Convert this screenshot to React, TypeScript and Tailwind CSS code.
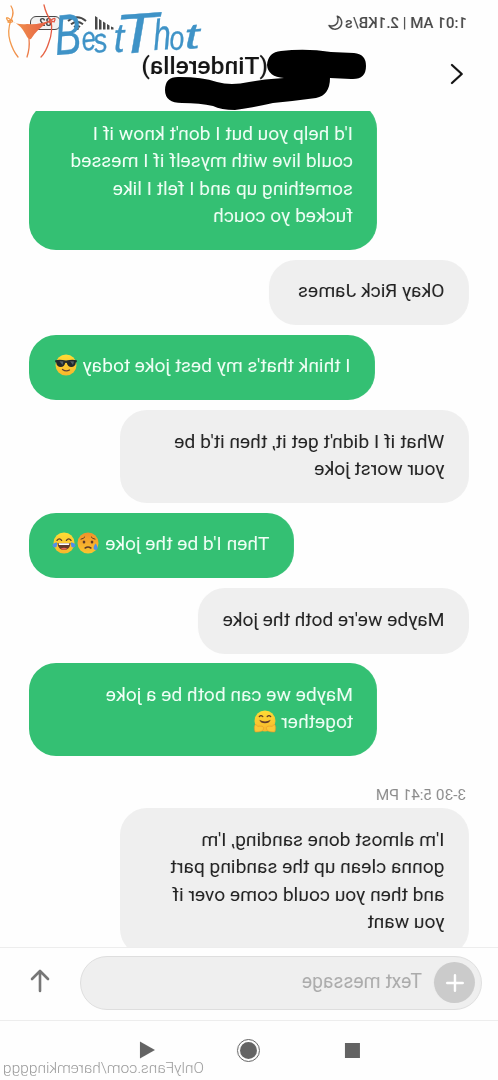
import type { ReactNode } from "react";

type EmojiKind = "cool" | "sad" | "joy" | "hug";

function Emoji({ kind }: { kind: EmojiKind }) {
  return (
    <svg viewBox="0 0 24 24" className="inline-block size-6 align-[-5px]" role="img" aria-label={kind}>
      <defs>
        <linearGradient id={`face-${kind}`} x1="0" y1="0" x2="0" y2="1">
          <stop offset="0" stopColor={kind === "sad" ? "#f0912b" : "#ffdc35"} />
          <stop offset="1" stopColor={kind === "sad" ? "#fbc62f" : "#f8b72c"} />
        </linearGradient>
      </defs>
      <circle cx="12" cy="12" r="10.5" fill={`url(#face-${kind})`} />
      {kind === "cool" && (
        <g>
          <path d="M1.2 7.2Q6 6 12 7.6Q18 6 22.8 7.2V9L21.8 9.6Q21.4 14 17.2 14Q13.8 14 12.8 10Q12 9.3 11.2 10Q10.2 14 6.8 14Q2.6 14 2.2 9.6L1.2 9Z" fill="#23292c" />
          <path d="M4 8.5L8 8.2L5 12Z M14.6 8.5L18.6 8.2L15.4 12Z" fill="#566067" />
          <path d="M8.5 17Q12 19 15.5 16.4" fill="none" stroke="#5f4037" strokeWidth="1.3" strokeLinecap="round" />
        </g>
      )}
      {kind === "sad" && (
        <g>
          <ellipse cx="8" cy="11" rx="1.3" ry="1.6" fill="#5b3828" />
          <ellipse cx="16" cy="11" rx="1.3" ry="1.6" fill="#5b3828" />
          <path d="M5 8.2Q7.6 7.8 8.8 6M19 8.2Q16.4 7.8 15.2 6" fill="none" stroke="#5b3828" strokeWidth="1" strokeLinecap="round" />
          <path d="M9.2 17Q12 15 14.8 17" fill="none" stroke="#5b3828" strokeWidth="1.6" strokeLinecap="round" />
          <path d="M4.4 12.6Q7 16 6.2 18Q4.4 20.2 2.6 18Q1.9 16 4.4 12.6Z" fill="#4f91e8" />
        </g>
      )}
      {kind === "joy" && (
        <g>
          <path d="M5 9.4Q7.3 6.3 9.6 9.4M14.4 9.4Q16.7 6.3 19 9.4" fill="none" stroke="#5b3828" strokeWidth="1.3" strokeLinecap="round" />
          <path d="M5.5 12H18.5Q18 19 12 19Q6 19 5.5 12Z" fill="#623a2a" />
          <path d="M6.5 12.3H17.5L17 14H7Z" fill="#fff" />
          <path d="M8.6 17.7Q12 15.6 15.4 17.7Q12 20 8.6 17.7Z" fill="#ed6550" />
          <path d="M4.8 11.2Q5.8 16.2 3 16.4Q-.4 16 .7 13.4Q1.5 12 4.8 11.2ZM19.2 11.2Q18.2 16.2 21 16.4Q24.4 16 23.3 13.4Q22.5 12 19.2 11.2Z" fill="#5190e7" />
        </g>
      )}
      {kind === "hug" && (
        <g>
          <path d="M6.3 7.6Q8 5.6 9.8 7.6M14.2 7.6Q16 5.6 17.7 7.6" fill="none" stroke="#5b3828" strokeWidth="1.3" strokeLinecap="round" />
          <path d="M6.3 10.8Q12 14 17.7 10.8Q16.4 14.3 12 14.3Q7.6 14.3 6.3 10.8Z" fill="#623a2a" />
          <path d="M2.2 23Q.3 17.6 2.6 15.2L4.7 17.4Q10 16.4 10.8 18.8Q10.6 23.4 2.2 23ZM21.8 23Q23.7 17.6 21.4 15.2L19.3 17.4Q14 16.4 13.2 18.8Q13.4 23.4 21.8 23Z" fill="#fac736" stroke="#e7952c" strokeWidth=".6" />
        </g>
      )}
    </svg>
  );
}

function Bubble({ mine = false, width, children }: { mine?: boolean; width: string; children: ReactNode }) {
  return (
    <div
      className={`shrink-0 whitespace-nowrap rounded-[27px] pt-[17.5px] pb-[20.5px] text-[19.24px] leading-[27.5px] ${width} ${
        mine ? "self-end bg-[#34c073] pl-[24.5px] text-[#f2fff7]" : "self-start bg-[#efefef] pl-[24.5px] text-[#202020]"
      }`}
    >
      {children}
    </div>
  );
}

function StatusBar() {
  return (
    <div className="flex h-[46px] items-center pl-[31px] text-[#484848]">
      <span className="w-[123px] whitespace-nowrap text-[15.1px] font-medium">1:01 AM | 2.1KB/s</span>
      <svg viewBox="0 0 16 16" className="size-4" fill="none" stroke="#484848" strokeWidth="1.4" strokeLinejoin="round">
        <path d="M6.7 1.2A6.7 6.7 0 1 0 15 10.4Q10 12 7.5 9Q4.8 5.5 6.7 1.2Z" />
      </svg>
      <svg viewBox="0 0 20 14" className="ml-[214px] h-[14px] w-5" fill="#484848">
        <path d="M.5 11.5L3 10.5V13.5H.5ZM4.500 9.500L7 8V13.500H4.500ZM8.500 7L11 5.500V13.500H8.500ZM12.500 4.500L15 3V13.500H12.500ZM16.500 1.500L19 0V13.500H16.500Z" />
      </svg>
      <svg viewBox="0 0 20 14" className="ml-[7px] h-[14px] w-5" fill="none" stroke="#484848" strokeWidth="2">
        <path d="M1 5Q10 -2.500 19 5M4 8.200Q10 3.500 16 8.200M7 11Q10 9 13 11" />
        <circle cx="10" cy="12.500" r=".8" fill="#484848" />
      </svg>
      <span className="ml-[6px] flex h-[13.5px] w-[31px] items-center justify-center rounded-[6px] border-[1.5px] border-[#484848] bg-[#f1f1f1] text-[11px] font-bold leading-3">
        82
      </span>
    </div>
  );
}

function BrandMark() {
  return (
    <svg viewBox="0 0 210 64" className="absolute left-0 top-0 h-16 w-[210px]">
      <defs>
        <linearGradient id="figure" gradientUnits="userSpaceOnUse" x1="5" x2="55" y1="0" y2="0">
          <stop offset="0" stopColor="#f4a14e" />
          <stop offset="1" stopColor="#e35343" />
        </linearGradient>
      </defs>
      <g fill="none" stroke="url(#figure)" strokeWidth="1.3" strokeLinecap="round">
        <path d="M11 6Q15 12 11 20Q7 31 10 41Q13 51 18 57" />
        <path d="M44 5Q46 14 51 21Q53 31 49 42Q46 52 41 57" />
        <path d="M27 57Q30 48 29 39" />
        <path d="M11 20Q4 15 8 21L12 20Q14 23 8 22M51 20Q57 16 54 22L50 20Q47 24 52 22" />
      </g>
      <path d="M12 21Q17 25 27 24Q40 25 51 20Q36 30 31 39Q28 40 26 35Q21 25 12 21Z" fill="url(#figure)" />
      <g fill="#3f93c7" stroke="#3f93c7" strokeWidth=".3" className="font-['Liberation_Sans'] italic">
        <text transform="translate(56 55) rotate(-4) scale(.69 1)" fontSize="57">B</text>
        <text transform="translate(83 51) rotate(-8) scale(.76 1)" fontSize="34">e</text>
        <text transform="translate(95 53) rotate(-8) scale(.8 1)" fontSize="34">s</text>
        <text transform="translate(114 52) rotate(-2) scale(.95 1)" fontSize="41">t</text>
        <text transform="translate(117 54) rotate(-4) scale(1.26 1)" fontSize="56">T</text>
        <text transform="translate(154 50) rotate(-3) scale(.73 1)" fontSize="43">h</text>
        <text transform="translate(170 50) rotate(-3) scale(.78 1)" fontSize="34">o</text>
        <text transform="translate(185 49) rotate(-4) scale(1.55 1)" fontSize="36">t</text>
      </g>
    </svg>
  );
}

function Scribble() {
  return (
    <svg viewBox="0 0 210 64" className="absolute left-[160px] top-[48px] h-16 w-[210px]">
      <path d="M121 3Q146 0 171 4L194 5Q206 6 206 18Q206 32 191 31L170 30Q170 47 156 50Q134 53 113 55Q91 60 75 62Q61 62 53 58Q40 55 22 55Q5 55 5 42Q5 28 20 29Q42 29 57 34Q71 38 89 34Q104 31 124 30Q108 29 107 17Q108 4 121 3Z" fill="#000" />
    </svg>
  );
}

export default function App() {
  return (
    <div className="relative h-[1080px] w-[498px] overflow-hidden bg-[#fefefe] font-['Roboto','Liberation_Sans',sans-serif]">
      <div className="flex h-full -scale-x-100 flex-col">
        <header className="h-[110.5px] shrink-0">
          <StatusBar />
          <div className="flex h-[56px] items-center">
            <svg viewBox="0 0 14 22" className="ml-[34px] h-[22px] w-[14px]" fill="none" stroke="#111" strokeWidth="2.2" strokeLinecap="round" strokeLinejoin="round">
              <path d="M12 2L2.2 11L12 20" />
            </svg>
            <h1 className="mb-[17px] ml-[182px] whitespace-nowrap text-[24.6px] font-medium leading-7 text-[#141414]">(Tinderella)</h1>
          </div>
        </header>

        <main className="flex h-[836px] shrink-0 flex-col overflow-hidden px-[29px]">
          <div className="-mt-[8.4px] flex flex-col gap-[9.7px]">
            <Bubble mine width="w-[348.5px]">
              <div>I'd help you but I don't know if I</div>
              <div>could live with myself if I messed</div>
              <div>something up and I felt I like</div>
              <div>fucked yo couch</div>
            </Bubble>
            <Bubble width="w-[200px]">Okay Rick James</Bubble>
            <Bubble mine width="w-[346px]">
              I think that's my best joke today <Emoji kind="cool" />
            </Bubble>
            <Bubble width="w-[348.5px]">
              <div>What if I didn't get it, then it'd be</div>
              <div>your worst joke</div>
            </Bubble>
            <Bubble mine width="w-[265px]">
              Then I'd be the joke <Emoji kind="sad" />
              <Emoji kind="joy" />
            </Bubble>
            <Bubble width="w-[271px]">Maybe we're both the joke</Bubble>
            <Bubble mine width="w-[348.5px]">
              <div>Maybe we can both be a joke</div>
              <div>
                together <Emoji kind="hug" />
              </div>
            </Bubble>
          </div>
          <time className="mt-[28.9px] mb-[3px] shrink-0 pl-[3px] text-[15.3px] leading-[20px] text-[#8b8b8b]">3-30 5:41 PM</time>
          <Bubble width="w-[348.5px]">
            <div>I'm almost done sanding, I'm</div>
            <div>gonna clean up the sanding part</div>
            <div>and then you could come over if</div>
            <div>you want</div>
          </Bubble>
        </main>

        <section className="flex h-[74.5px] shrink-0 items-center border-y border-[#ededed] pb-[2px] pl-4">
          <div className="flex h-[54px] w-[402px] items-center rounded-full border border-[#dedede] bg-[#efefef] pl-[5.5px]">
            <span className="flex size-[41px] items-center justify-center rounded-full bg-[#cbcbcb]">
              <svg viewBox="0 0 18 18" className="size-[18px]" stroke="#fff" strokeWidth="2.4" strokeLinecap="round">
                <path d="M1.2 9H16.8M9 1.2V16.8" />
              </svg>
            </span>
            <span className="ml-[12.5px] text-[19.3px] text-[#ababab]">Text message</span>
          </div>
          <svg viewBox="0 0 20 24" className="mb-1 ml-[29.5px] h-6 w-5" fill="none" stroke="#777" strokeWidth="2.6" strokeLinecap="round" strokeLinejoin="round">
            <path d="M10 22V2M2 10L10 2L18 10" />
          </svg>
        </section>

        <nav className="relative flex h-[58px] shrink-0 items-center pl-[138px]">
          <span className="size-[15px] bg-[#636363]" />
          <span className="ml-[84.5px] flex size-[23px] items-center justify-center rounded-full border-[1.5px] border-[#636363]">
            <span className="size-[17px] rounded-full bg-[#636363]" />
          </span>
          <svg viewBox="0 0 15 18" className="ml-[82px] h-[18px] w-[15px]" fill="#636363">
            <path d="M15 .5V17.5L0 9Z" />
          </svg>
          <span className="absolute left-[294px] top-[37px] whitespace-nowrap text-[15.5px] font-light leading-5 text-[#9a9a9a]">OnlyFans.com/haremkingggg</span>
        </nav>
      </div>
      <Scribble />
      <BrandMark />
    </div>
  );
}
